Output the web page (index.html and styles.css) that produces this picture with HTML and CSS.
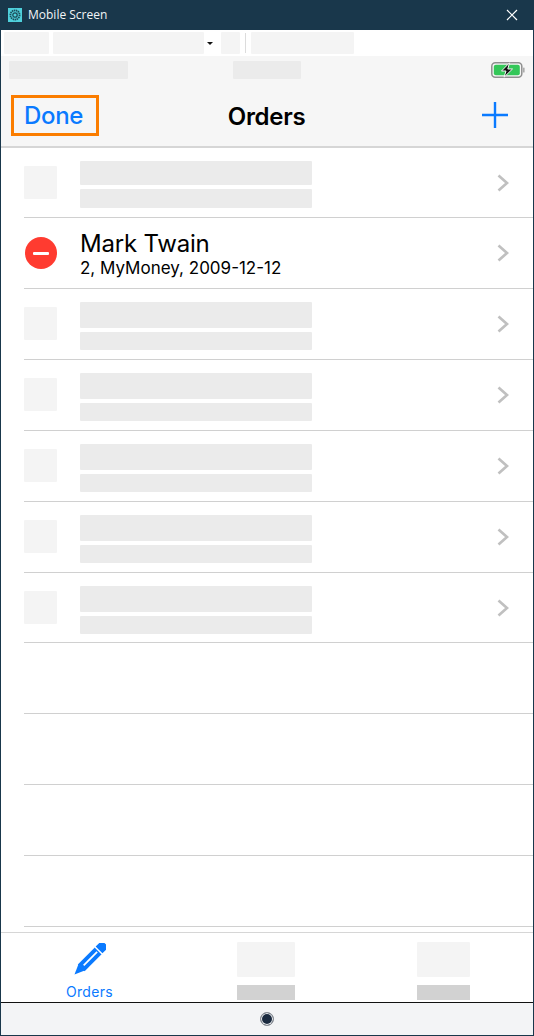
FILE: index.html
```html
<!DOCTYPE html>
<html lang="en">

<head>
    <meta charset="UTF-8">
    <meta name="viewport" content="width=device-width, initial-scale=1.0">
    <title>Mobile Screen</title>

    <link rel="stylesheet" href="styles.css">
</head>

<body>
    <div class="window">
        <header class="titlebar">
            <svg class="app-icon" viewBox="0 0 14 14">
                <rect width="14" height="14" fill="#4fd0dc" />
                <circle cx="7" cy="7" r="4.6" fill="none" stroke="#1d4a58" stroke-width="1.8" stroke-dasharray="1.4 .6" />
                <circle cx="7" cy="7" r="2.2" fill="none" stroke="#1d4a58" stroke-width="1.3" />
            </svg>
            <span class="title">Mobile Screen</span>
            <svg class="close" viewBox="0 0 12 12">
                <path d="M1 1 L11 11 M11 1 L1 11" stroke="#fff" stroke-width="1.2" fill="none" />
            </svg>
        </header>

        <div class="toolbar">
            <div class="ph tool-a"></div>
            <div class="ph tool-b"></div>
            <div class="caret"></div>
            <div class="ph tool-c"></div>
            <div class="tool-sep"></div>
            <div class="ph tool-d"></div>
        </div>

        <div class="phone">
            <div class="statusbar">
                <div class="ph-dark status-a"></div>
                <div class="ph-dark status-b"></div>
                <svg class="battery" viewBox="0 0 34 16">
                    <rect x=".8" y=".8" width="30" height="14.4" rx="3.5" fill="none" stroke="#8f8f8f" stroke-width="1.5" />
                    <rect x="2.8" y="2.8" width="26" height="10.4" rx="2" fill="#34c759" />
                    <rect x="32.2" y="5.5" width="1.3" height="5" rx=".6" fill="#9a9a9a" />
                    <path d="M18.5 .8 L10.5 9 H15 L13 15.2 L21.5 7 H16.8 Z" fill="#111" stroke="#f6f6f6" stroke-width="1" />
                </svg>
            </div>

            <nav class="navbar">
                <div class="done-box"><span class="done">Done</span></div>
                <h1 class="nav-title">Orders</h1>
                <svg class="plus" viewBox="0 0 26 26">
                    <path d="M13 0 V26 M0 13 H26" stroke="#0a7aff" stroke-width="2.4" fill="none" />
                </svg>
            </nav>

            <main class="list">
                <div class="row row-first">
                    <div class="ph thumb"></div>
                    <div class="lines">
                        <div class="ph-dark line1 line1-short"></div>
                        <div class="ph-dark line2 line2-tall"></div>
                    </div>
                    <svg class="chevron" viewBox="0 0 12 18"><path d="M1.5 1.5 L10 9 L1.5 16.5" /></svg>
                </div>
                <div class="row">
                    <div class="minus"><div class="minus-bar"></div></div>
                    <div class="order">
                        <div class="order-name">Mark Twain</div>
                        <div class="order-info">2, MyMoney, 2009-12-12</div>
                    </div>
                    <svg class="chevron" viewBox="0 0 12 18"><path d="M1.5 1.5 L10 9 L1.5 16.5" /></svg>
                </div>
                <div class="row">
                    <div class="ph thumb"></div>
                    <div class="lines">
                        <div class="ph-dark line1"></div>
                        <div class="ph-dark line2"></div>
                    </div>
                    <svg class="chevron" viewBox="0 0 12 18"><path d="M1.5 1.5 L10 9 L1.5 16.5" /></svg>
                </div>
                <div class="row">
                    <div class="ph thumb"></div>
                    <div class="lines">
                        <div class="ph-dark line1"></div>
                        <div class="ph-dark line2"></div>
                    </div>
                    <svg class="chevron" viewBox="0 0 12 18"><path d="M1.5 1.5 L10 9 L1.5 16.5" /></svg>
                </div>
                <div class="row">
                    <div class="ph thumb"></div>
                    <div class="lines">
                        <div class="ph-dark line1"></div>
                        <div class="ph-dark line2"></div>
                    </div>
                    <svg class="chevron" viewBox="0 0 12 18"><path d="M1.5 1.5 L10 9 L1.5 16.5" /></svg>
                </div>
                <div class="row">
                    <div class="ph thumb"></div>
                    <div class="lines">
                        <div class="ph-dark line1"></div>
                        <div class="ph-dark line2"></div>
                    </div>
                    <svg class="chevron" viewBox="0 0 12 18"><path d="M1.5 1.5 L10 9 L1.5 16.5" /></svg>
                </div>
                <div class="row row-short">
                    <div class="ph thumb"></div>
                    <div class="lines">
                        <div class="ph-dark line1"></div>
                        <div class="ph-dark line2"></div>
                    </div>
                    <svg class="chevron" viewBox="0 0 12 18"><path d="M1.5 1.5 L10 9 L1.5 16.5" /></svg>
                </div>
                <div class="row"></div>
                <div class="row"></div>
                <div class="row"></div>
                <div class="row"></div>
            </main>

            <footer class="tabbar">
                <div class="tab tab-orders">
                    <svg class="pencil" viewBox="0 0 32 32">
                        <g transform="translate(0.5 31.5) rotate(-45)">
                            <path d="M0 0 L10 -4.4 V4.4 Z" fill="#0a7aff" />
                            <rect x="9.5" y="-4.8" width="24" height="9.6" fill="#0a7aff" />
                            <rect x="13" y="-.9" width="19" height="1.8" fill="#fff" />
                            <rect x="33.5" y="-4.8" width="1.2" height="9.6" fill="#fff" />
                            <path d="M34.7 -4.8 H39.5 A4 4 0 0 1 43.5 -.8 V.8 A4 4 0 0 1 39.5 4.8 H34.7 Z" fill="#0a7aff" />
                        </g>
                    </svg>
                    <span class="tab-label">Orders</span>
                </div>
                <div class="tab tab-two">
                    <div class="ph tab-icon"></div>
                    <div class="tab-ph"></div>
                </div>
                <div class="tab tab-three">
                    <div class="ph tab-icon"></div>
                    <div class="tab-ph"></div>
                </div>
            </footer>
        </div>

        <div class="homebar">
            <div class="home-button"></div>
        </div>
    </div>
</body>

</html>
```

FILE: styles.css
```css
html,
body {
    margin: 0;
    padding: 0;
    height: 100%;
    overflow: hidden;
}

body {
    font-family: Inter, "Liberation Sans", sans-serif;
    background: #fff;
    color: #000;
}

.window {
    box-sizing: border-box;
    width: 534px;
    height: 1036px;
    display: flex;
    flex-direction: column;
    border-left: 1px solid #19374b;
    border-right: 1px solid #19374b;
    border-bottom: 1px solid #19374b;
}

/* barra de titulo */
.titlebar {
    height: 30px;
    margin: 0 -1px;
    padding: 0 16px 0 8px;
    flex: none;
    display: flex;
    align-items: center;
    background: #19374b;
    color: #fff;
}

.app-icon {
    width: 14px;
    height: 14px;
    margin-right: 6px;
}

.title {
    margin-top: -1px;
    font-family: "Open Sans", sans-serif;
    font-size: 12px;
    color: #f2f5f7;
}

.close {
    width: 12px;
    height: 12px;
    margin-left: auto;
}

/* placeholders */
.ph {
    background: #f4f4f4;
    border-radius: 1px;
}

.ph-dark {
    background: #ebebeb;
    border-radius: 1px;
}

.toolbar {
    height: 26px;
    flex: none;
    padding: 2px 0 2px 3px;
    box-sizing: border-box;
    display: flex;
    align-items: stretch;
}

.tool-a {
    width: 45px;
}

.tool-b {
    width: 151px;
    margin-left: 4px;
}

.caret {
    width: 0;
    height: 0;
    margin: 10px 0 0 3px;
    border-left: 3px solid transparent;
    border-right: 3px solid transparent;
    border-top: 3px solid #111;
}

.tool-c {
    width: 19px;
    margin-left: 8px;
}

.tool-sep {
    width: 1px;
    margin: 1px 5px;
    background: #dcdcdc;
}

.tool-d {
    width: 103px;
}

.phone {
    flex: 1;
    display: flex;
    flex-direction: column;
    min-height: 0;
}

.statusbar {
    height: 30px;
    flex: none;
    padding: 5px 8px 0 8px;
    box-sizing: border-box;
    display: flex;
    align-items: flex-start;
    background: #f6f6f6;
}

.status-a {
    width: 119px;
    height: 18px;
}

.status-b {
    width: 68px;
    height: 18px;
    margin-left: 105px;
}

.battery {
    width: 34px;
    height: 16px;
    margin: 1px 0 0 auto;
}

.navbar {
    height: 62px;
    flex: none;
    box-sizing: border-box;
    padding: 0 25px 0 10px;
    display: flex;
    align-items: center;
    position: relative;
    background: #f6f6f6;
    border-bottom: 2px solid #d6d6d6;
}

.done-box {
    box-sizing: border-box;
    width: 88px;
    height: 41px;
    margin-top: -2px;
    padding-left: 10px;
    display: flex;
    align-items: center;
    border: 3px solid #fb7d00;
}

.done {
    font-size: 24px;
    font-weight: 500;
    letter-spacing: -0.3px;
    color: #0a7aff;
}

/* el titulo va centrado encima de la barra */
.nav-title {
    position: absolute;
    left: 0;
    right: 1px;
    margin: 0;
    text-align: center;
    font-size: 24px;
    font-weight: 600;
    letter-spacing: -0.3px;
}

.plus {
    width: 26px;
    height: 26px;
    margin: -2px 0 0 auto;
}

.list {
    flex: 1;
    min-height: 0;
    overflow: hidden;
}

.row {
    box-sizing: border-box;
    height: 71px;
    margin-left: 23px;
    padding-right: 24px;
    display: flex;
    align-items: center;
    border-bottom: 1px solid #d0d0d0;
}

.row-first,
.row-short {
    height: 70px;
}

.thumb {
    width: 33px;
    height: 33px;
    margin-top: -2px;
    flex: none;
}

.row-first .thumb,
.row-short .thumb {
    margin-top: 0;
}

.lines {
    width: 232px;
    margin-top: 4px;
    margin-left: 23px;
    display: flex;
    flex-direction: column;
    gap: 4px;
}

.line1 {
    height: 26px;
}

.line2 {
    height: 18px;
}

.line1-short {
    height: 24px;
}

.line2-tall {
    height: 19px;
}

.chevron {
    width: 12px;
    height: 18px;
    margin-left: auto;
    fill: none;
    stroke: #c0c0c0;
    stroke-width: 2.7;
}

.minus {
    width: 32px;
    height: 32px;
    margin-left: 1px;
    flex: none;
    display: flex;
    align-items: center;
    justify-content: center;
    border-radius: 50%;
    background: #ff3b30;
}

.minus-bar {
    width: 16px;
    height: 3px;
    border-radius: 1px;
    background: #fff;
}

.order {
    margin-left: 23px;
    margin-top: 1px;
}

.order-name {
    font-size: 24px;
    line-height: 29px;
    letter-spacing: -0.2px;
}

.order-info {
    font-size: 17px;
    line-height: 20px;
}

.tabbar {
    height: 70px;
    flex: none;
    box-sizing: border-box;
    margin-top: 5px;
    display: flex;
    background: #fff;
    border-top: 1px solid #d6d6d6;
}

.tab {
    position: relative;
    display: flex;
    flex-direction: column;
    align-items: center;
}

.tab-orders {
    width: 177px;
}

.tab-two {
    width: 176px;
}

.tab-three {
    width: 179px;
}

.pencil {
    width: 32px;
    height: 32px;
    margin-top: 10px;
}

.tab-label {
    margin-top: 8px;
    font-size: 14px;
    line-height: 17px;
    letter-spacing: 0.3px;
    color: #0a7aff;
}

.tab-icon {
    height: 35px;
    margin-top: 9px;
}

.tab-two .tab-icon,
.tab-two .tab-ph {
    width: 58px;
}

.tab-three .tab-icon,
.tab-three .tab-ph {
    width: 53px;
}

.tab-ph {
    height: 15px;
    margin-top: 8px;
    background: #d2d2d2;
}

.homebar {
    height: 33px;
    flex: none;
    display: flex;
    align-items: center;
    justify-content: center;
    background: #f3f4f6;
    border-top: 1px solid #111;
    box-sizing: border-box;
}

.home-button {
    box-sizing: border-box;
    width: 14px;
    height: 14px;
    border-radius: 50%;
    background: #1a2a3f;
    border: 1px solid #8b8f96;
    box-shadow: inset 0 0 0 1px #f3f4f6;
}
```
